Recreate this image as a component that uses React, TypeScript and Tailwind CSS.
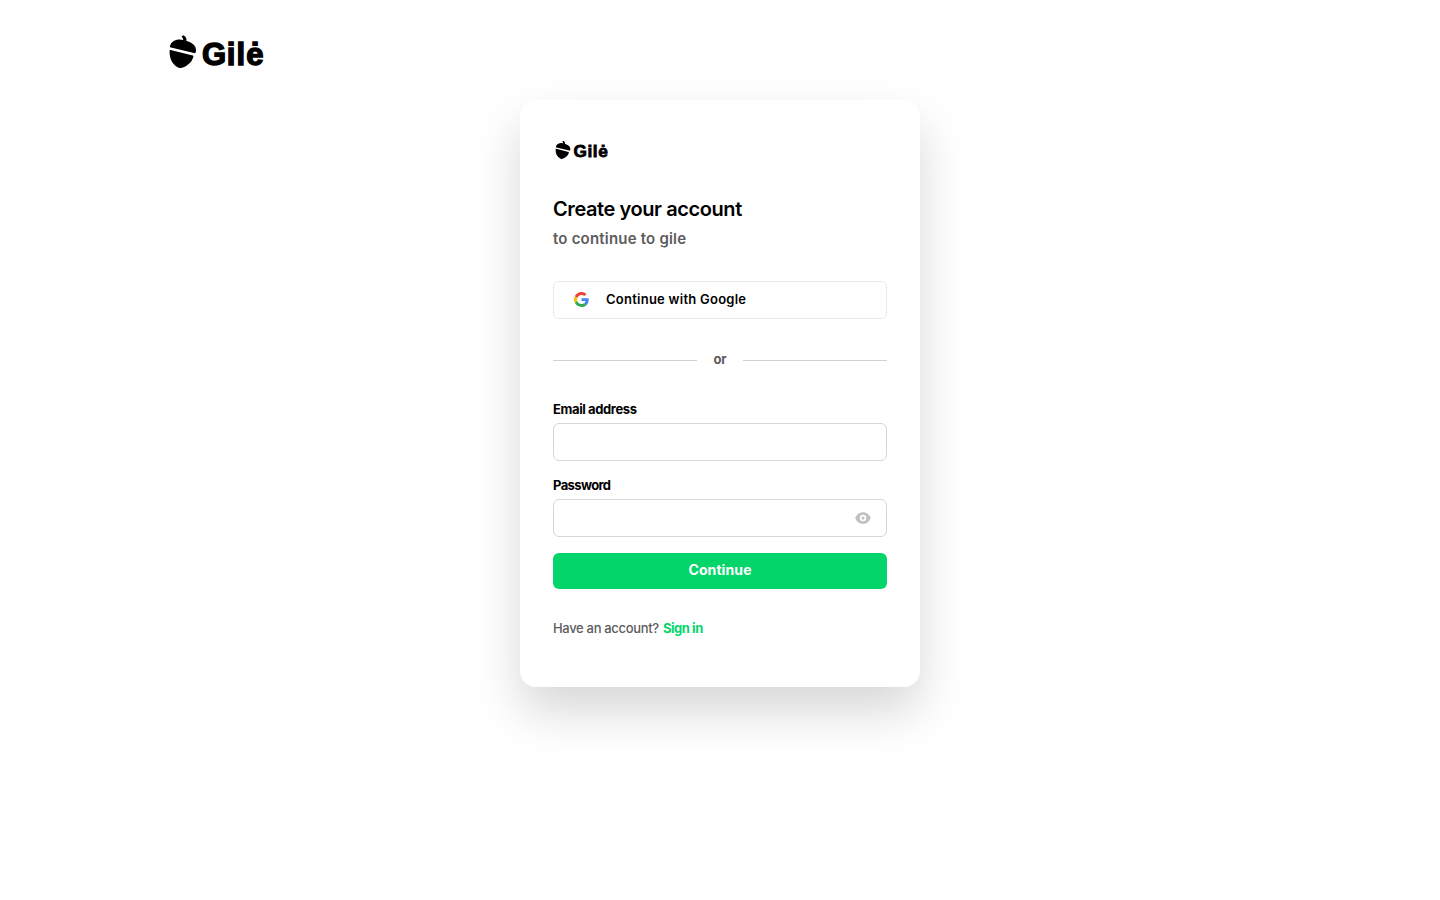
import React, { useState } from 'react';

interface LogoProps {
  className?: string;
}

function Logo({ className }: LogoProps) {
  return (
    <svg viewBox="0 0 96 36" className={className} role="img" aria-label="Gilė">
      <path d="M1 12.4C1.6 8.6 5.2 6 9.6 5.6C11.4 5.4 12.8 5.7 14.2 6.1C14.2 4.6 13.6 3.6 12.4 2.6L14.6 1.2C17 2.6 17.8 4.6 17.4 7C22.6 8.2 27.2 11.4 27 16.4C26.9 18.6 26.5 19.5 25 19.1L2 13.6C1.2 13.4 0.9 13.1 1 12.4Z" />
      <path d="M1.6 15.9L23.8 21.4C24.4 21.6 24.6 21.9 24.4 22.6C23.2 27.8 19.6 30.6 16.2 32.6C14 33.9 11.8 34.5 9.8 33.7C4 31.4 0.2 25 0.6 16.7C0.6 16 1 15.8 1.6 15.9Z" />
      <text
        x="32.9 57.7 67.5 77.2"
        y="31.4"
        stroke="currentColor"
        strokeWidth="1.4"
        className="font-['Liberation_Sans',sans-serif] text-[31px] font-bold"
      >
        Gilė
      </text>
    </svg>
  );
}

function GoogleIcon() {
  return (
    <svg viewBox="0 0 48 48" className="mb-px h-[15px] w-[15px]">
      <path fill="#EA4335" d="M24 9.5c3.54 0 6.71 1.22 9.21 3.6l6.85-6.85C35.9 2.38 30.47 0 24 0 14.62 0 6.51 5.38 2.56 13.22l7.98 6.19C12.43 13.72 17.74 9.5 24 9.5z" />
      <path fill="#4285F4" d="M46.98 24.55c0-1.57-.15-3.09-.38-4.55H24v9.02h12.94c-.58 2.96-2.26 5.48-4.78 7.18l7.73 6c4.51-4.18 7.09-10.36 7.09-17.65z" />
      <path fill="#FBBC05" d="M10.53 28.59c-.48-1.45-.76-2.99-.76-4.59s.27-3.14.76-4.59l-7.98-6.19C.92 16.46 0 20.12 0 24c0 3.88.92 7.54 2.56 10.78l7.97-6.19z" />
      <path fill="#34A853" d="M24 48c6.48 0 11.93-2.13 15.89-5.81l-7.73-6c-2.15 1.45-4.92 2.3-8.16 2.3-6.26 0-11.57-4.22-13.47-9.91l-7.98 6.19C6.51 42.62 14.62 48 24 48z" />
    </svg>
  );
}

function EyeIcon() {
  return (
    <svg viewBox="0 0 16 12" className="h-3 w-4" fill="currentColor">
      <path
        fillRule="evenodd"
        d="M8 .2C4.3.2 1.5 2.5.3 6c1.2 3.5 4 5.8 7.7 5.8s6.5-2.3 7.7-5.8C14.5 2.5 11.7.2 8 .2ZM8 2.8a3.2 3.2 0 1 1 0 6.4 3.2 3.2 0 0 1 0-6.4Z"
      />
      <circle cx="8" cy="6" r="1.6" />
    </svg>
  );
}

export default function App() {
  const [email, setEmail] = useState('');
  const [password, setPassword] = useState('');
  const [showPassword, setShowPassword] = useState(false);

  return (
    <div className="min-h-screen bg-white font-['Inter',sans-serif] text-black">
      <header className="h-[100px] pl-[169px] pt-[34px]">
        <Logo className="h-9 w-24 overflow-visible" />
      </header>

      <main className="mx-auto h-[587px] w-[400px] rounded-2xl bg-white px-[33px] pt-10 shadow-[0_24px_48px_rgba(0,0,0,0.16)]">
        <Logo className="ml-0.5 h-[20px] w-[54px] overflow-visible" />

        <div className="mt-[34px]">
          <h1 className="h-[30px] whitespace-nowrap text-[20px] font-semibold leading-[30px] tracking-[-0.42px]">Create your account</h1>
          <p className="mt-1 h-6 whitespace-nowrap text-[15px] font-semibold leading-[22px] tracking-[0.2px] text-[#5c5c5c]">to continue to gile</p>
        </div>

        <button className="mt-[29px] flex h-[38px] w-full items-center rounded-md border border-[#ebebeb] pl-[20px] text-left">
          <GoogleIcon />
          <span className="ml-[17px] whitespace-nowrap text-[13px] font-semibold tracking-[0.25px]">Continue with Google</span>
        </button>

        <div className="mt-8 flex h-[18px] items-center gap-4">
          <div className="h-px flex-1 bg-[#d0d0d0]" />
          <span className="w-[14px] pb-px text-center text-[13px] font-bold leading-[17px] tracking-[-0.2px] text-[#5c5c5c]">or</span>
          <div className="h-px flex-1 bg-[#d0d0d0]" />
        </div>

        <form onSubmit={(e) => e.preventDefault()}>
          <label htmlFor="email" className="mt-[31px] block h-[23px] whitespace-nowrap text-[13px] font-bold leading-[18px] tracking-[-0.39px]">
            Email address
          </label>
          <input
            id="email"
            type="email"
            value={email}
            onChange={(e) => setEmail(e.target.value)}
            className="block h-[38px] w-full rounded-md border border-[#d6d6d6] px-3 text-[13px] outline-none"
          />

          <label htmlFor="password" className="mt-[15px] block h-[23px] whitespace-nowrap text-[13px] font-bold leading-[18px] tracking-[-0.62px]">
            Password
          </label>
          <div className="flex h-[38px] items-center rounded-md border border-[#d6d6d6] pr-[15px]">
            <input
              id="password"
              type={showPassword ? 'text' : 'password'}
              value={password}
              onChange={(e) => setPassword(e.target.value)}
              className="h-full min-w-0 flex-1 px-3 text-[13px] outline-none"
            />
            <button type="button" aria-label="Show password" onClick={() => setShowPassword(!showPassword)} className="text-[#c0c0c0]">
              <EyeIcon />
            </button>
          </div>

          <button type="submit" className="mt-4 flex h-9 w-full justify-center rounded-md bg-[#03d56b] text-[14px] font-bold leading-[34px] tracking-[0.1px] text-white">
            Continue
          </button>
        </form>

        <div className="mt-[30px] flex gap-1 whitespace-nowrap text-[13px] leading-[18px]">
          <span className="font-medium tracking-[-0.32px] text-[#5c5c5c]">Have an account?</span>
          <a href="#" className="font-bold tracking-[-0.45px] text-[#03d56b]">Sign in</a>
        </div>
      </main>
    </div>
  );
}
